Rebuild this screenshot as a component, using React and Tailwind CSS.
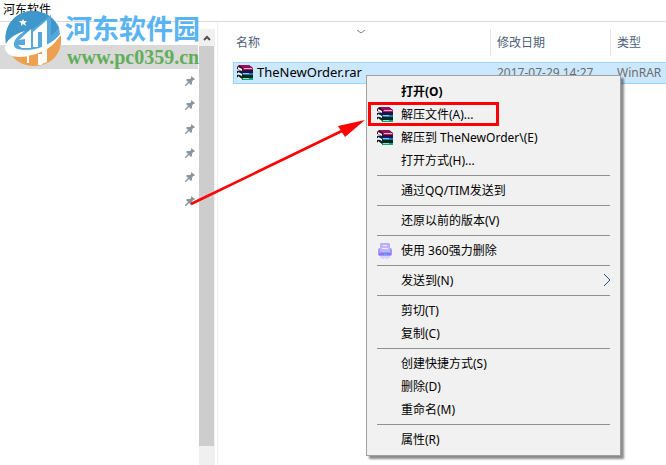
import React from "react";

const cjk = "font-['Noto_Sans','Noto_Sans_CJK_SC',sans-serif]";

// WinRAR stack of books
const RarIcon = () => (
  <svg className="h-4 w-4 shrink-0" viewBox="0 0 16 16" aria-hidden="true">
    {/* Green book */}
    <path d="M0 10l5-1h11v6H6l-6-3z" fill="#06281c" />
    <path d="M5 13h11v2H6z" fill="#14a47c" />
    <path d="M6 13h6v1H6z" fill="#8ce8c8" />
    <path d="M1 11l4 3v1l-4-2z" fill="#fff" />
    {/* Blue book */}
    <path d="M0 6l5-1h11v5H6L0 8z" fill="#0b1c4c" />
    <path d="M5 8h11v2H6z" fill="#1c74c4" />
    <path d="M6 8h6v1H6z" fill="#8cc8f4" />
    <path d="M1 7l4 2v2L1 9z" fill="#fff" />
    {/* Purple book */}
    <path d="M0 2l2-2h10l4 3v3H6L0 4z" fill="#3c0828" />
    <path d="M2 0h10l3 3H6z" fill="#960f5c" />
    <path d="M6 3h10v2H6z" fill="#b0186c" />
    <path d="M7 3h8v1H7z" fill="#eab4d4" />
    <path d="M1 2l4 2v2L1 4z" fill="#fff" />
  </svg>
);

const ShredIcon = () => (
  <svg className="h-4 w-4 shrink-0" viewBox="0 0 16 16" aria-hidden="true">
    <path d="M3 12h10v3h-2v1H9v-1H7v1H5v-1H3z" fill="#d9d4fb" />
    <rect x="3" y="0" width="10" height="9" rx="1" fill="#b9affc" />
    <rect x="1" y="5" width="14" height="8" rx="2" fill="#a396fa" />
    <rect x="3" y="3" width="10" height="6" rx="1" fill="#bdb4fd" />
    <path d="M6 2h4v1H6zM5 5h6v1H5z" fill="#eeeaff" />
    <path d="M2 10h12v2H2z" fill="#8577f4" />
    <path d="M7 11h3v1H7z" fill="#35c9ef" />
  </svg>
);

const PinIcon = () => (
  <svg className="h-[10px] w-[10px]" viewBox="0 0 10 10" aria-hidden="true">
    <path d="M6 0l4 3-1 1-1 0-1 2 0 2-1 1-2-2-3 3H0V9l3-3-2-2 1-1 3 0 1-1V1z" fill="#8a969e" />
  </svg>
);

const SiteLogo = () => (
  <svg className="h-14 w-14 shrink-0" viewBox="0 0 56 56" aria-hidden="true">
    {/* Sky half */}
    <path d="M1 33C-2 14 11 0 28 0c12 0 22 7 26 17l1 6C46 36 30 41 12 38z" fill="#56a8da" />
    <path d="M1 33C-2 14 11 0 28 0c12 0 22 7 26 17l-8 8V4L28 18 12 24C7 26 3 29 1 33z" fill="#3f97cc" />
    {/* Orange half */}
    <path d="M56 24c2 18-9 31-27 31-11 0-19-5-24-13 18 5 38-1 51-18z" fill="#eda04e" />
    {/* White orbit */}
    <path
      d="M20 20C9 23 0 30 0 37c1 9 14 11 27 7 13-3 23-10 28-20-8 8-18 13-29 15-11 1-18-1-17-6 0-5 5-9 11-13z"
      fill="#fff"
    />
    {/* Towers */}
    <path d="M14 29l12-11v19h-9l-4-3h7v-6z" fill="#fff" />
    <path d="M28 21L42 9v42l-5 2V21h-4v15h-5z" fill="#fff" />
    <path d="M22 44h2v8h-2zM33 43h4v11h-4z" fill="#fff" />
    <path d="M18 8l1 2 3 0-2 2 1 3-3-2-2 2 0-3-2-2h3z" fill="#fff" />
  </svg>
);

const menuGroups = [
  [
    { label: "打开(O)", bold: true },
    { label: "解压文件(A)...", icon: "rar", marked: true },
    { label: "解压到 TheNewOrder\\(E)", icon: "rar" },
    { label: "打开方式(H)..." },
  ],
  [{ label: "通过QQ/TIM发送到" }],
  [{ label: "还原以前的版本(V)" }],
  [{ label: "使用 360强力删除", icon: "shred" }],
  [{ label: "发送到(N)", submenu: true }],
  [{ label: "剪切(T)" }, { label: "复制(C)" }],
  [{ label: "创建快捷方式(S)" }, { label: "删除(D)" }, { label: "重命名(M)" }],
  [{ label: "属性(R)" }],
];

const MenuItem = ({ item }) => (
  <li className="relative">
    <button
      className={`flex h-[23px] w-full items-center pr-[9px] pl-[10px] text-left ${
        item.bold ? "font-bold" : ""
      }`}
    >
      <span className="w-6 shrink-0">
        {item.icon === "rar" && <RarIcon />}
        {item.icon === "shred" && <ShredIcon />}
      </span>
      <span className="flex-1 whitespace-nowrap">{item.label}</span>
      {item.submenu && (
        <svg className="h-4 w-2" viewBox="0 0 8 16" fill="none" stroke="#17518c" aria-hidden="true">
          <path d="M1 1l6 6-6 6" />
        </svg>
      )}
    </button>
    {/* Red frame round the entry to click */}
    {item.marked && (
      <span className="pointer-events-none absolute -top-px left-px h-6 w-[131px] border-3 border-[#fe0000]" />
    )}
  </li>
);

const ContextMenu = () => (
  <ul className="absolute top-[75px] left-[366px] w-[255px] border border-[#a0a0a0] bg-[#f1f1f1] py-1 text-xs text-black shadow-[3px_3px_2px_rgba(0,0,0,0.45)]">
    {menuGroups.map((group, i) => (
      <React.Fragment key={group[0].label}>
        {i > 0 && <li className="mx-[10px] my-[3px] h-px bg-[#919191]" />}
        {group.map((item) => (
          <MenuItem key={item.label} item={item} />
        ))}
      </React.Fragment>
    ))}
  </ul>
);

const Watermark = () => (
  <div className="pointer-events-none absolute top-[11px] left-[5px] flex gap-1">
    <SiteLogo />
    <div className="pt-px font-bold whitespace-nowrap">
      <p className="text-[27px] leading-[34px] text-[#5ab4f2]">河东软件园</p>
      <p className="pl-[2px] font-['Liberation_Serif',serif] text-xl leading-[22px] text-[#60ae57]">www.pc0359.cn</p>
    </div>
  </div>
);

const Sidebar = () => (
  <aside className="flex w-[215px] shrink-0 pt-[7px]">
    <div className="flex-1 pt-4">
      <div className="mr-px h-6 bg-[#d9d9d9]" />
      <ul className="flex flex-col items-end gap-[14px] pt-[7px] pr-1">
        {[1, 2, 3, 4, 5, 6].map((n) => (
          <li key={n}>
            <PinIcon />
          </li>
        ))}
      </ul>
    </div>
    <div className="flex w-4 flex-col bg-[#f0f0f0] pr-px pb-[19px]">
      <button className="flex h-[17px] items-center justify-center" aria-label="向上滚动">
        <svg className="h-2 w-2" viewBox="0 0 8 8" fill="none" stroke="#505050" strokeWidth="2">
          <path d="M1 6l3-3 3 3" />
        </svg>
      </button>
      <div className="flex-1 bg-[#cdcdcd]" />
    </div>
  </aside>
);

const FileList = () => (
  <main className="ml-[2px] flex-1 overflow-hidden border-l border-[#f0f0f0] pt-[7px] pl-[15px]">
    <table className="w-full table-fixed border-separate border-spacing-0 text-left text-xs">
      <colgroup>
        <col className="w-[258px]" />
        <col className="w-[120px]" />
        <col />
      </colgroup>
      <thead>
        <tr className="h-[27px] text-[#4c607a]">
          <th className="relative border-r border-[#e5e5e5] p-0 pl-[3px] font-normal">
            名称
            <svg className="absolute top-px left-[124px] h-1 w-2" viewBox="0 0 8 4" fill="none" stroke="#808080" aria-hidden="true">
              <path d="M0 0l4 3 4-3" />
            </svg>
          </th>
          <th className="border-r border-[#e5e5e5] p-0 pl-[6px] font-normal">修改日期</th>
          <th className="p-0 pl-[6px] font-normal">类型</th>
        </tr>
      </thead>
      <tbody>
        <tr>
          <td className="h-[6px] p-0" colSpan={3} />
        </tr>
        <tr className="h-[22px] text-[#6d6d6d]">
          <td className="border-y border-l border-[#99d1ff] bg-[#cce8ff] p-0 pl-[3px] text-[13px] text-black">
            <span className="flex items-center gap-1">
              <RarIcon />
              TheNewOrder.rar
            </span>
          </td>
          <td className="border-y border-[#99d1ff] bg-[#cce8ff] p-0 pl-[6px] whitespace-nowrap">2017-07-29 14:27</td>
          <td className="border-y border-[#99d1ff] bg-[#cce8ff] p-0 pl-[6px] whitespace-nowrap">WinRAR</td>
        </tr>
      </tbody>
    </table>
  </main>
);

const App = () => (
  <div className={`relative flex min-h-screen flex-col overflow-hidden bg-white ${cjk}`}>
    <header className="h-[22px] border-b border-[#d9d9d9] pl-[3px] text-xs leading-5 text-black">河东软件</header>
    <div className="flex flex-1">
      <Sidebar />
      <FileList />
    </div>
    <Watermark />
    <ContextMenu />
    {/* Arrow pointing at the marked entry */}
    <svg className="pointer-events-none absolute top-[118px] left-[190px] h-[88px] w-[176px]" viewBox="0 0 176 88" aria-hidden="true">
      <path d="M1 86L158 10" stroke="#fe0000" strokeWidth="2.5" />
      <path d="M175 2l-27 6 7 11z" fill="#fe0000" />
    </svg>
  </div>
);

export default App;
